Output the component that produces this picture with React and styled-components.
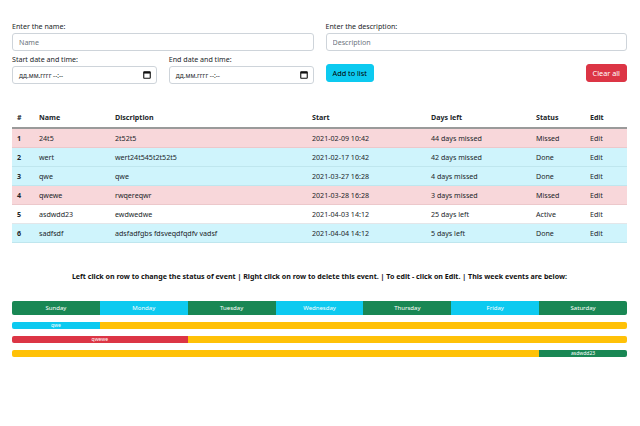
import React from "react";
import styled, { createGlobalStyle } from "styled-components";

const GlobalStyle = createGlobalStyle`
  body {
    margin: 0;
    background: #fff;
    color: #212529;
    font-family: "Noto Sans", "Open Sans", sans-serif;
    font-size: 7.1px;
  }
`;

const Page = styled.div`
  padding: 21px 13px 0 12px;
`;

const FormGrid = styled.div`
  display: grid;
  grid-template-columns: 1fr 1fr;
  column-gap: 12px;
  row-gap: 3px;
`;

const Field = styled.div`
  display: flex;
  flex-direction: column;
`;

const Label = styled.label`
  line-height: 10px;
  margin-bottom: 2px;
  color: #212529;
`;

const TextInput = styled.input`
  box-sizing: border-box;
  height: 18px;
  padding: 0 6px;
  border: 1px solid #ced4da;
  border-radius: 3px;
  font: inherit;
  font-size: 7.1px;
  color: #212529;
  outline: none;
  &::placeholder {
    color: #6c757d;
  }
`;

const DatePair = styled.div`
  display: grid;
  grid-template-columns: 1fr 1fr;
  column-gap: 12px;
`;

const DateBox = styled.div`
  box-sizing: border-box;
  height: 18px;
  padding: 0 5px 0 6px;
  border: 1px solid #ced4da;
  border-radius: 3px;
  display: flex;
  align-items: center;
  justify-content: space-between;
  font-size: 6.4px;
  color: #212529;
`;

const ButtonBar = styled.div`
  display: flex;
  justify-content: space-between;
  align-items: flex-start;
  padding-top: 10px;
`;

const Button = styled.button`
  height: 18px;
  padding: 0 6px;
  border: 1px solid ${(p) => p.$bg};
  border-radius: 3px;
  background: ${(p) => p.$bg};
  color: ${(p) => p.$fg};
  font: inherit;
  font-size: 7.3px;
  cursor: pointer;
`;

const Table = styled.table`
  width: 100%;
  margin-top: 24px;
  border-collapse: collapse;
  table-layout: fixed;
`;

const Th = styled.th`
  box-sizing: border-box;
  width: ${(p) => p.$w}px;
  text-align: left;
  font-weight: 700;
  line-height: 11px;
  padding: 4px 0 4px 5px;
  border-bottom: 2px solid #9a9a9a;
  color: #212529;
`;

const rowColors = {
  Missed: { bg: "#f8d7da", line: "#ecc8cb" },
  Done: { bg: "#cff4fc", line: "#bfe6ee" },
  Active: { bg: "#ffffff", line: "#e3e6e9" },
};

const Row = styled.tr`
  background: ${(p) => rowColors[p.$status].bg};
  td {
    border-bottom: 1px solid ${(p) => rowColors[p.$status].line};
  }
`;

const Td = styled.td`
  line-height: 11px;
  padding: 3.5px 0 3.5px 5px;
  white-space: nowrap;
  overflow: hidden;
  font-weight: ${(p) => (p.$bold ? 700 : 400)};
  color: #212529;
`;

const Hint = styled.p`
  margin: 27px 0 0;
  text-align: center;
  font-weight: 700;
  line-height: 12px;
  color: #111;
`;

const Week = styled.div`
  margin-top: 19px;
  display: flex;
  flex-direction: column;
  gap: 7px;
`;

const Bar = styled.div`
  display: flex;
  height: ${(p) => p.$h}px;
  border-radius: 2px;
  overflow: hidden;
`;

const Segment = styled.div`
  flex: ${(p) => p.$span} 0 0;
  background: ${(p) => p.$bg};
  color: #fff;
  font-size: ${(p) => p.$fs}px;
  line-height: ${(p) => p.$h}px;
  text-align: center;
  white-space: nowrap;
  overflow: hidden;
`;

const GREEN = "#198754";
const CYAN = "#0dcaf0";
const YELLOW = "#ffc107";
const RED = "#dc3545";

const columns = [
  ["#", 22],
  ["Name", 76],
  ["Discription", 197],
  ["Start", 119],
  ["Days left", 105],
  ["Status", 54],
  ["Edit", 42],
];

const events = [
  { id: 1, name: "24t5", desc: "2t52t5", start: "2021-02-09 10:42", left: "44 days missed", status: "Missed" },
  { id: 2, name: "wert", desc: "wert24t545t2t52t5", start: "2021-02-17 10:42", left: "42 days missed", status: "Done" },
  { id: 3, name: "qwe", desc: "qwe", start: "2021-03-27 16:28", left: "4 days missed", status: "Done" },
  { id: 4, name: "qwewe", desc: "rwqereqwr", start: "2021-03-28 16:28", left: "3 days missed", status: "Missed" },
  { id: 5, name: "asdwdd23", desc: "ewdwedwe", start: "2021-04-03 14:12", left: "25 days left", status: "Active" },
  { id: 6, name: "sadfsdf", desc: "adsfadfgbs fdsveqdfqdfv vadsf", start: "2021-04-04 14:12", left: "5 days left", status: "Done" },
];

const days = ["Sunday", "Monday", "Tuesday", "Wednesday", "Thursday", "Friday", "Saturday"];

const weekBars = [
  [{ span: 1, bg: CYAN, label: "qwe" }, { span: 6, bg: YELLOW }],
  [{ span: 2, bg: RED, label: "qwewe" }, { span: 5, bg: YELLOW }],
  [{ span: 6, bg: YELLOW }, { span: 1, bg: GREEN, label: "asdwdd23" }],
];

function CalendarIcon() {
  return (
    <svg width="8" height="8" viewBox="0 0 8 8">
      <rect x="0.75" y="0.75" width="6.5" height="6.5" rx="0.6" fill="none" stroke="#111" strokeWidth="1.1" />
      <rect x="0.75" y="0.75" width="6.5" height="1.8" fill="#111" />
    </svg>
  );
}

function DateField({ label }) {
  return (
    <Field>
      <Label>{label}</Label>
      <DateBox>
        <span>дд.мм.гггг --:--</span>
        <CalendarIcon />
      </DateBox>
    </Field>
  );
}

function App() {
  return (
    <Page>
      <GlobalStyle />
      <FormGrid>
        <Field>
          <Label>Enter the name:</Label>
          <TextInput placeholder="Name" />
        </Field>
        <Field>
          <Label>Enter the description:</Label>
          <TextInput placeholder="Description" />
        </Field>
        <DatePair>
          <DateField label="Start date and time:" />
          <DateField label="End date and time:" />
        </DatePair>
        <ButtonBar>
          <Button $bg={CYAN} $fg="#000">Add to list</Button>
          <Button $bg={RED} $fg="#fff">Clear all</Button>
        </ButtonBar>
      </FormGrid>

      <Table>
        <thead>
          <tr>
            {columns.map(([title, w]) => (
              <Th key={title} $w={w}>{title}</Th>
            ))}
          </tr>
        </thead>
        <tbody>
          {events.map((e) => (
            <Row key={e.id} $status={e.status}>
              <Td $bold>{e.id}</Td>
              <Td>{e.name}</Td>
              <Td>{e.desc}</Td>
              <Td>{e.start}</Td>
              <Td>{e.left}</Td>
              <Td>{e.status}</Td>
              <Td>Edit</Td>
            </Row>
          ))}
        </tbody>
      </Table>

      <Hint>
        Left click on row to change the status of event | Right click on row to delete this event. | To edit - click on Edit. | This week events are below:
      </Hint>

      <Week>
        <Bar $h={14}>
          {days.map((d, i) => (
            <Segment key={d} $span={1} $bg={i % 2 ? CYAN : GREEN} $fs={6} $h={14}>
              {d}
            </Segment>
          ))}
        </Bar>
        {weekBars.map((segs, i) => (
          <Bar key={i} $h={7}>
            {segs.map((s, j) => (
              <Segment key={j} $span={s.span} $bg={s.bg} $fs={5} $h={7}>
                {s.label}
              </Segment>
            ))}
          </Bar>
        ))}
      </Week>
    </Page>
  );
}

export default App;
